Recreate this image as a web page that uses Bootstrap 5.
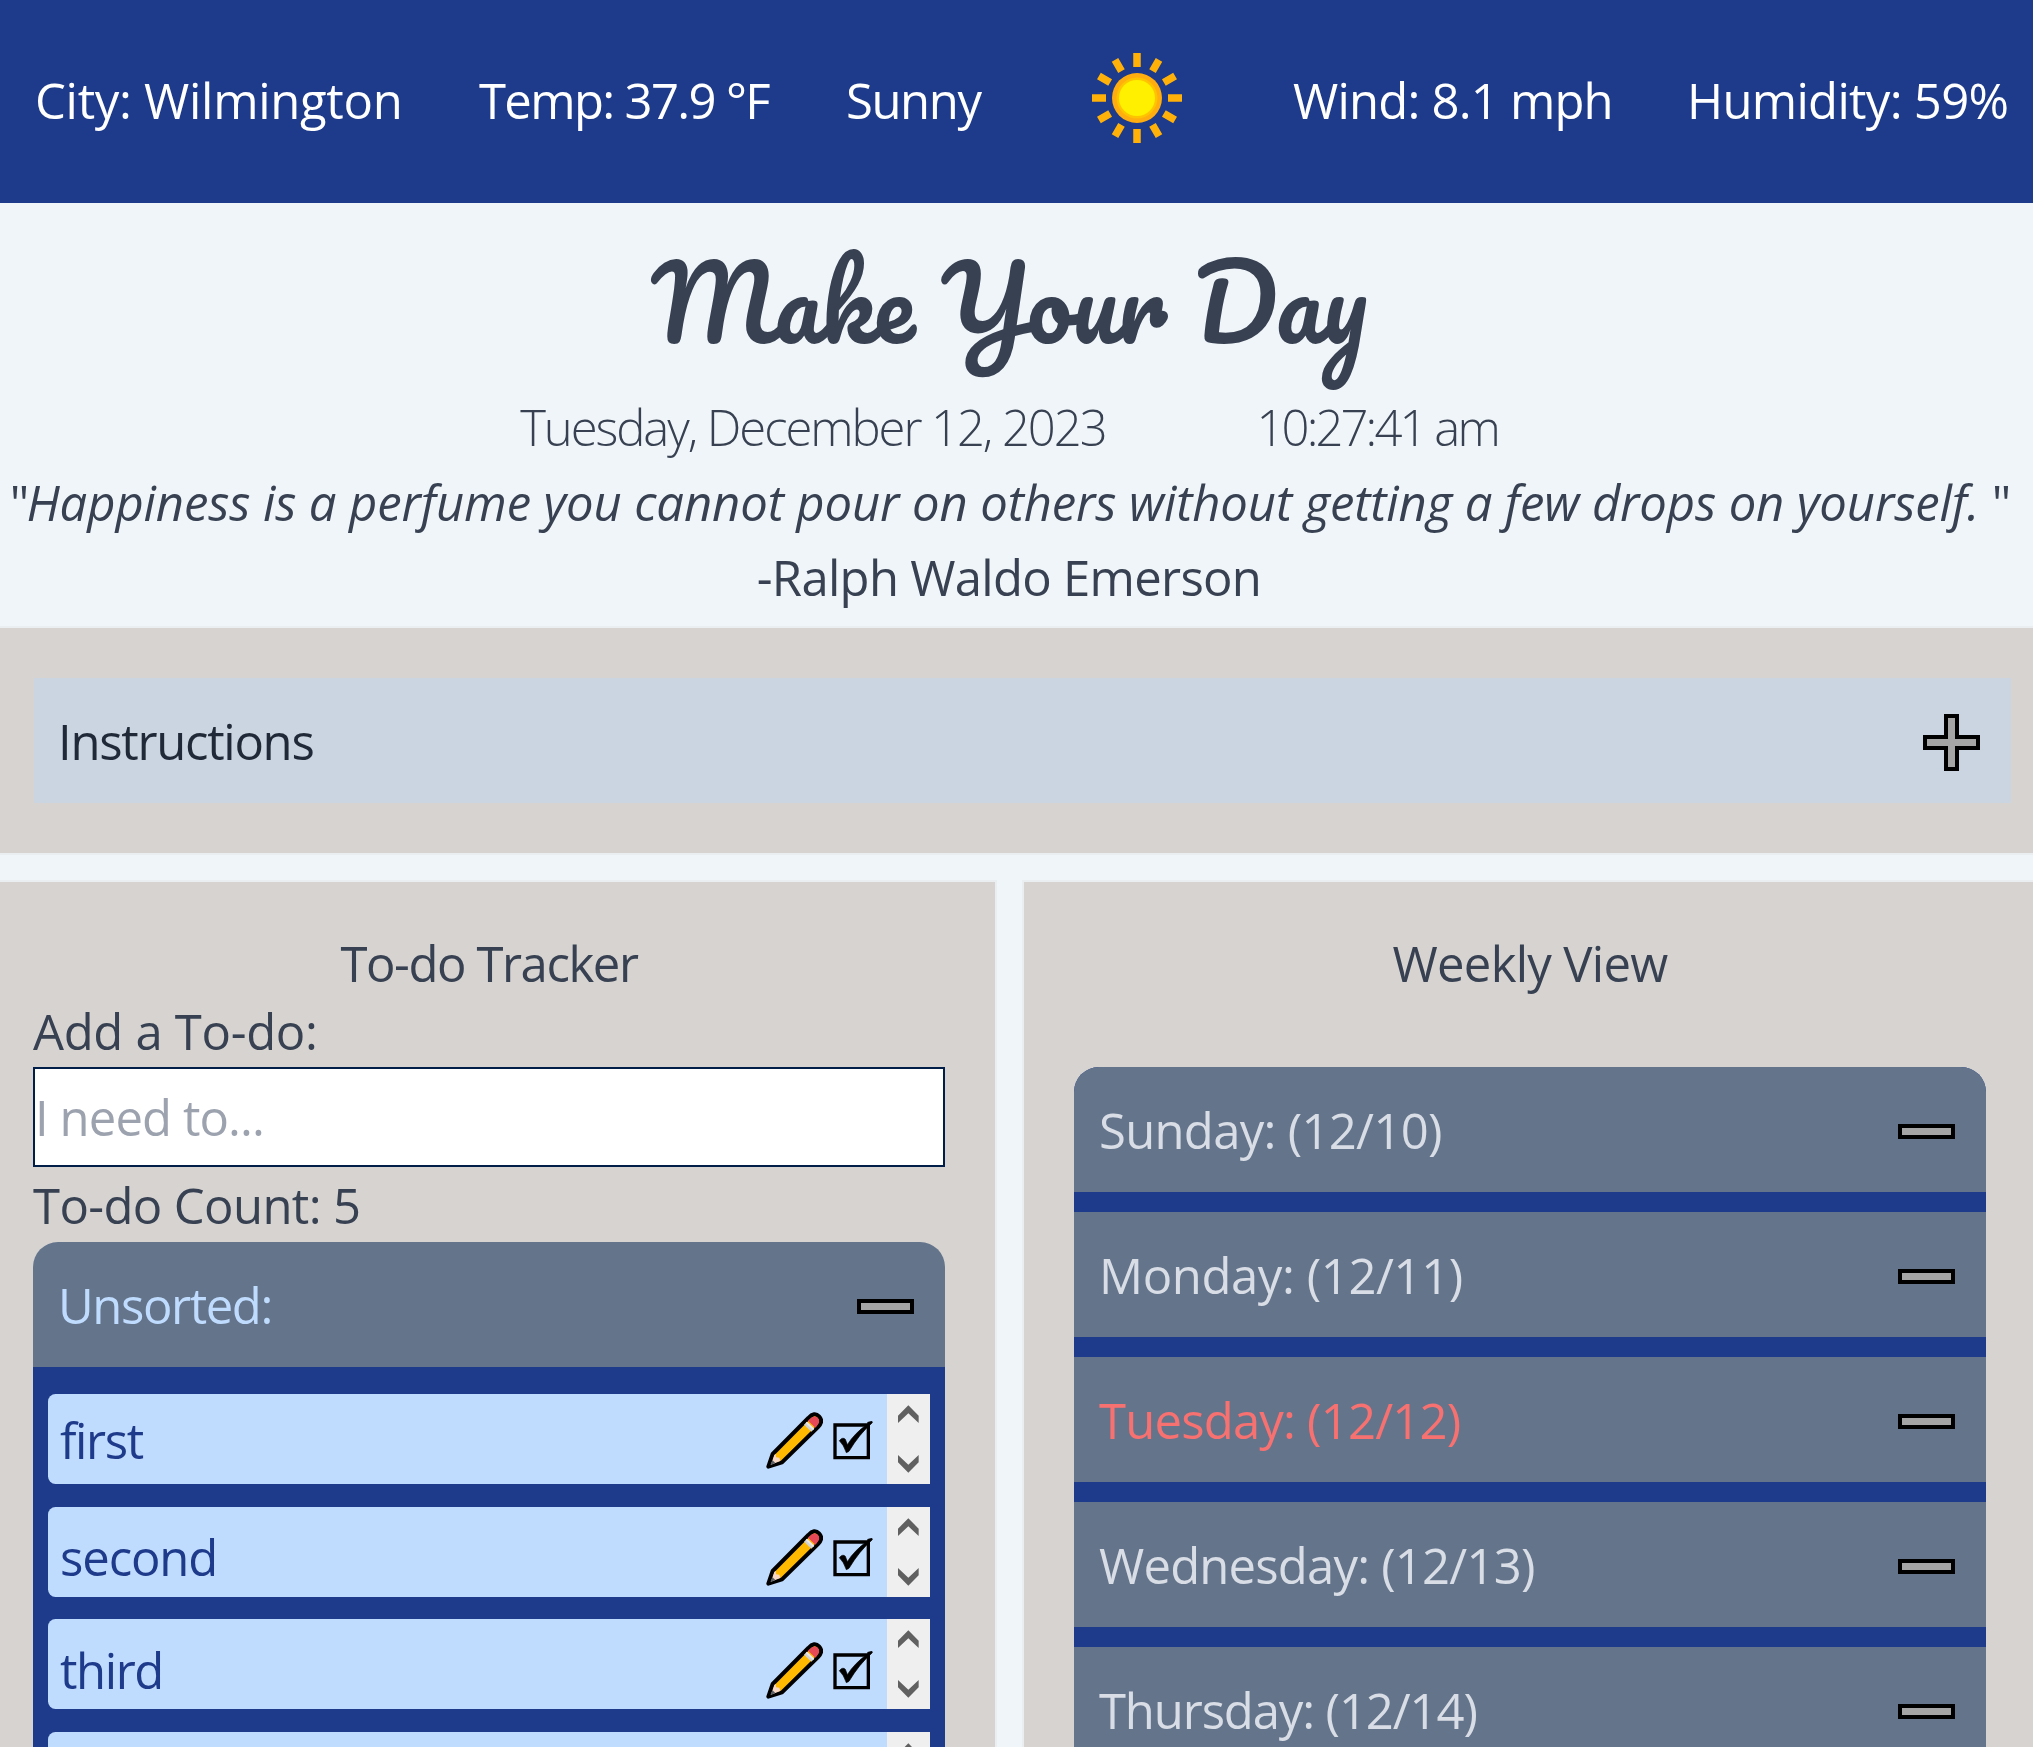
<!DOCTYPE html>
<html lang="en">
<head>
<meta charset="utf-8">
<meta name="viewport" content="width=device-width, initial-scale=1">
<title>Make Your Day</title>
<link href="https://cdn.jsdelivr.net/npm/bootstrap@5.3.0/dist/css/bootstrap.min.css" rel="stylesheet">
<style>
  body { background: #f0f5f9; color: #374151; font-family: "Segoe UI", "Open Sans", "Noto Sans", sans-serif; font-size: 49px; line-height: 75px; height: 1747px; overflow: hidden; white-space: nowrap; }
  svg { display: block; flex: none; }
  .weather { background: #1e3a8a; height: 203px; padding: 0 0 3px 35px; grid-template-columns: 444px 367px 246px 201px 394px 346px; }
  .weather svg { margin-top: -4px; }
  .hero { padding: 12px 15px 13.5px 0; }
  .brand { font: 400 100px/174.5px Pacifico, Lato, sans-serif; margin: 0; color: #384152; }
  .clock { gap: 151px; font-weight: 300; }
  .quote { letter-spacing: -.11px; padding-left: 3px; }
  .quote-open { letter-spacing: -3px; }
  .panel { background: #d6d3d1; box-shadow: 0 0 0 2px #eaeef1; }
  .help { padding: 50px 22px 50px 34px; }
  .boards { margin-top: 29px; gap: 29px; height: 865px; }
  .tracker { width: 995px; padding: 43px 50px 0 33px; }
  .week { padding: 43px 47px 0 50px; }
  .panel h2 { font-size: 49px; line-height: 76px; font-weight: 400; margin: 0; text-align: center; }
  .week h2 { margin-bottom: 66px; }
  .add-label { line-height: 60px; margin-bottom: 6px; display: block; }
  .todo-input { width: 100%; height: 100px; border: 2px solid #001e47; border-radius: 0; padding: 0; font-size: 49px; line-height: 75px; letter-spacing: -.9px; background: #fff; display: block; }
  .todo-input::placeholder { color: #9ca3af; opacity: 1; }
  .count { height: 75px; padding-top: 2px; letter-spacing: -.6px; line-height: 73px; }
  .bar { height: 125px; padding: 2px 31px 0 25px; background: #64748b; color: #d8dde6; }
  .bar svg { margin-top: 2px; }
  .bar-help { background: #cbd5e1; color: #1f2937; padding-left: 24px; }
  .top-round { border-radius: 25px 25px 0 0; overflow: hidden; }
  .days { background: #1e3a8a; gap: 20px; }
  .today { color: #f87171; }
  .unsorted { color: #bfdbfe; }
  .list-body { background: #1e3a8a; padding: 27px 15px 0 14.5px; height: 400px; gap: 22.6px; }
  .todo { height: 90px; flex: none; background: #bfdbfe; color: #1e3a8a; border-radius: 7.5px 0 0 7.5px; overflow: hidden; }
  .todo-row { padding: 3px 14px 0 12.5px; gap: 10px; }
  .todo-row.drop-4 { padding-top: 11px; }
  .todo-row.drop-5 { padding-top: 13px; }
  .ls-3 { letter-spacing: -.3px; } .ls-4 { letter-spacing: -.4px; }
  .ls-7 { letter-spacing: -.7px; } .ls-8 { letter-spacing: -.8px; } .ls-11 { letter-spacing: -1.12px; }
  .ls-13 { letter-spacing: -1.28px; } .ls-14 { letter-spacing: -1.4px; } .ls-16 { letter-spacing: -1.65px; }
  .ls-21 { letter-spacing: -2.07px; } .ls-29 { letter-spacing: -2.9px; }
</style>
</head>
<body>
<svg width="0" height="0" class="position-absolute" aria-hidden="true">
  <symbol id="minus" viewBox="0 0 57 15"><rect x="2" y="2" width="53" height="11" fill="#a5a5a5" stroke="#000" stroke-width="4"/></symbol>
  <symbol id="plus" viewBox="0 0 57 57"><path d="M23 2h11v21h21v11h-21v21H23v-21h-21V23h21z" fill="#a5a5a5" stroke="#000" stroke-width="4"/></symbol>
  <symbol id="pencil" viewBox="35 101 171 171">
    <path d="M42 265 55 227 162 119Q180 99 194 114T191 146L83 252Z" fill="#ffb900" stroke="#000" stroke-width="12" stroke-linejoin="round"/>
    <path d="M60 230 50 259 78 248 75 238 65 237 64 226Z" fill="#f7d7c4"/>
    <path d="M54 245 48 260 63 254Z" fill="#5b6067"/>
    <path d="M149 139 158 130 180 151 171 160Z" fill="#d2d2d2"/>
    <path d="M154 134 158 130 180 151 176 155Z" fill="#e9e9e9"/>
    <path d="M164 124Q179 108 190 118T186 145L183 148 161 127Z" fill="#e74856"/>
  </symbol>
  <symbol id="check" viewBox="234 125 120 117">
    <path d="M240 137h100v98h-100z" fill="none" stroke="#000" stroke-width="10"/>
    <path d="M338 129 351 126 352 130Q312 165 282 216L274 220Q266 196 253 184 263 172 271 180L277 196Q300 160 338 134Z" stroke="#000" stroke-width="2"/>
  </symbol>
  <symbol id="scroll" viewBox="396 42 129 270">
    <path fill="#efefef" d="M396 42h129v270H396z"/>
    <path fill="#606060" d="M460 76 491 107V129L460 100 429 129V107ZM460 278 491 247V225L460 254 429 225V247Z"/>
  </symbol>
</svg>

<header class="weather d-grid align-items-center text-white">
  <span class="ls-3">City: Wilmington</span>
  <span class="ls-16">Temp: 37.9 °F</span>
  <span class="ls-14">Sunny</span>
  <svg width="90" height="90" viewBox="-45 -45 90 90" role="img" aria-label="Sunny">
    <g stroke="#ffb10a" stroke-width="7.500">
      <path d="M0-45V-31M0 45V31M-45 0H-31M45 0H31"/>
      <path d="M0-44V-31M0 44V31M-44 0H-31M44 0H31" transform="rotate(30)"/>
      <path d="M0-44V-31M0 44V31M-44 0H-31M44 0H31" transform="rotate(60)"/>
    </g>
    <circle r="25" fill="#ffad0f"/><circle r="20.500" fill="#ffc400"/><circle r="18" fill="#fff000"/>
  </svg>
  <span class="ls-8">Wind: 8.1 mph</span>
  <span class="ls-7">Humidity: 59%</span>
</header>

<section class="hero text-center">
  <h1 class="brand">Make Your Day</h1>
  <div class="clock d-flex justify-content-center"><span class="ls-21">Tuesday, December 12, 2023</span><span class="ls-29">10:27:41 am</span></div>
  <div class="quote"><span class="quote-open">"</span><em>Happiness is a perfume you cannot pour on others without getting a few drops on yourself. </em>"</div>
  <div class="ls-7">-Ralph Waldo Emerson</div>
</section>

<section class="panel help">
  <div class="bar bar-help d-flex align-items-center justify-content-between"><span class="ls-13">Instructions</span><svg width="57" height="57"><use href="#plus"/></svg></div>
</section>

<main class="boards d-flex">
  <section class="panel tracker flex-shrink-0">
    <h2 class="ls-14">To-do Tracker</h2>
    <label class="add-label ls-3" for="todo">Add a To-do:</label>
    <input class="todo-input" id="todo" type="text" placeholder="I need to...">
    <div class="count">To-do Count: 5</div>
    <div class="top-round">
      <div class="bar unsorted d-flex align-items-center justify-content-between"><span class="ls-14">Unsorted:</span><svg width="57" height="15"><use href="#minus"/></svg></div>
      <div class="list-body d-flex flex-column">
        <div class="todo d-flex"><div class="todo-row d-flex align-items-center flex-grow-1"><span class="me-auto ls-14">first</span><svg width="57" height="57"><use href="#pencil"/></svg><svg width="40" height="39"><use href="#check"/></svg></div><svg width="43" height="90"><use href="#scroll"/></svg></div>
        <div class="todo d-flex"><div class="todo-row drop-4 d-flex align-items-center flex-grow-1"><span class="me-auto ls-11">second</span><svg width="57" height="57"><use href="#pencil"/></svg><svg width="40" height="39"><use href="#check"/></svg></div><svg width="43" height="90"><use href="#scroll"/></svg></div>
        <div class="todo d-flex"><div class="todo-row drop-5 d-flex align-items-center flex-grow-1"><span class="me-auto ls-14">third</span><svg width="57" height="57"><use href="#pencil"/></svg><svg width="40" height="39"><use href="#check"/></svg></div><svg width="43" height="90"><use href="#scroll"/></svg></div>
        <div class="todo d-flex"><div class="flex-grow-1"></div><svg width="43" height="90"><use href="#scroll"/></svg></div>
      </div>
    </div>
  </section>

  <section class="panel week flex-grow-1">
    <h2 class="ls-7">Weekly View</h2>
    <div class="days top-round d-flex flex-column">
      <div class="bar d-flex align-items-center justify-content-between"><span class="ls-7">Sunday: (12/10)</span><svg width="57" height="15"><use href="#minus"/></svg></div>
      <div class="bar d-flex align-items-center justify-content-between"><span class="ls-4">Monday: (12/11)</span><svg width="57" height="15"><use href="#minus"/></svg></div>
      <div class="bar today d-flex align-items-center justify-content-between"><span class="ls-8">Tuesday: (12/12)</span><svg width="57" height="15"><use href="#minus"/></svg></div>
      <div class="bar d-flex align-items-center justify-content-between"><span class="ls-8">Wednesday: (12/13)</span><svg width="57" height="15"><use href="#minus"/></svg></div>
      <div class="bar d-flex align-items-center justify-content-between"><span class="ls-11">Thursday: (12/14)</span><svg width="57" height="15"><use href="#minus"/></svg></div>
    </div>
  </section>
</main>
<script src="https://cdn.jsdelivr.net/npm/bootstrap@5.3.0/dist/js/bootstrap.bundle.min.js"></script>
</body>
</html>
